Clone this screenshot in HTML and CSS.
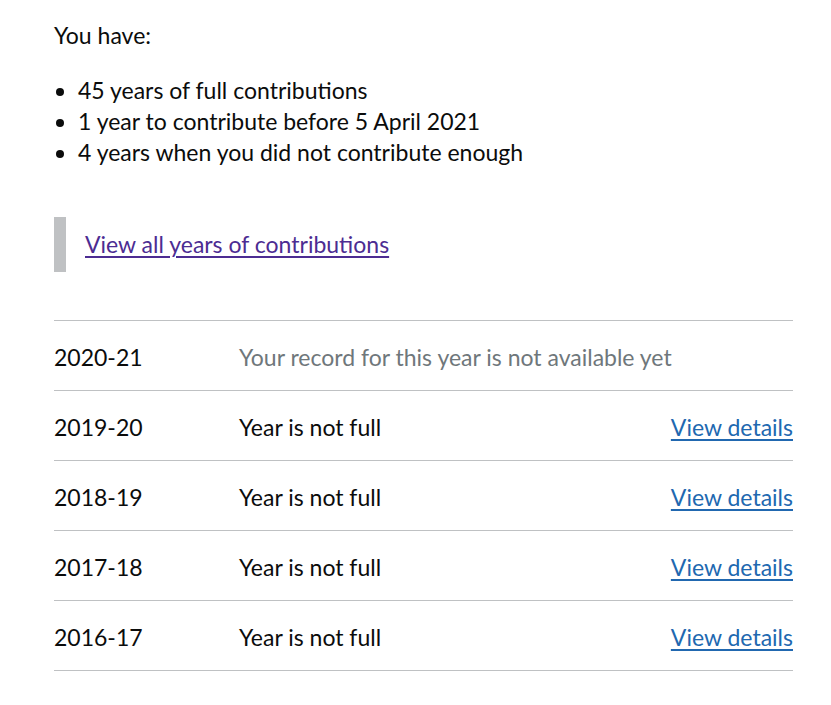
FILE: index.html
```html
<!DOCTYPE html>
<html lang="en">
<head>
<meta charset="utf-8">
<title>National Insurance record</title>
<link rel="stylesheet" href="styles.css">
</head>
<body>
<main class="page">
  <p class="lead">You have:</p>
  <ul class="bullets">
    <li>45 years of full contributions</li>
    <li>1 year to contribute before 5 April 2021</li>
    <li>4 years when you did not contribute enough</li>
  </ul>
  <div class="inset">
    <a class="link visited" href="#all">View all years of contributions</a>
  </div>
  <div class="years">
    <div class="row">
      <span class="year">2020-21</span>
      <span class="status muted">Your record for this year is not available yet</span>
      <span class="action"></span>
    </div>
    <div class="row">
      <span class="year">2019-20</span>
      <span class="status">Year is not full</span>
      <a class="action link" href="#y1">View details</a>
    </div>
    <div class="row">
      <span class="year">2018-19</span>
      <span class="status">Year is not full</span>
      <a class="action link" href="#y2">View details</a>
    </div>
    <div class="row">
      <span class="year">2017-18</span>
      <span class="status">Year is not full</span>
      <a class="action link" href="#y3">View details</a>
    </div>
    <div class="row">
      <span class="year">2016-17</span>
      <span class="status">Year is not full</span>
      <a class="action link" href="#y4">View details</a>
    </div>
  </div>
</main>
</body>
</html>
```
FILE: styles.css
```css
html, body {
  margin: 0;
  padding: 0;
  background: #ffffff;
}
body {
  font-family: Lato, "Noto Sans", sans-serif;
  font-size: 23px;
  line-height: 31px;
  color: #0b0c0c;
}
.page {
  width: 739px;
  padding: 20px 0 33px 54px;
}
.lead {
  margin: 0 0 24px 0;
}
.bullets {
  margin: 0;
  padding: 0 0 0 24px;
}
.bullets li {
  padding: 0;
}
.inset {
  margin-top: 49px;
  border-left: 12px solid #bfc1c3;
  padding: 12px 0 12px 19px;
}
.link {
  color: #2168b0;
  text-decoration: underline;
  text-underline-offset: 3px;
  text-decoration-thickness: 2px;
}
.link.visited {
  color: #4c2c92;
}
.years {
  margin-top: 48px;
  border-top: 1px solid #bfc1c3;
}
.row {
  display: grid;
  grid-template-columns: 185px 1fr auto;
  padding: 21px 0 17px 0;
  border-bottom: 1px solid #bfc1c3;
}
.muted {
  color: #6f777b;
}
.action {
  justify-self: end;
}
```
